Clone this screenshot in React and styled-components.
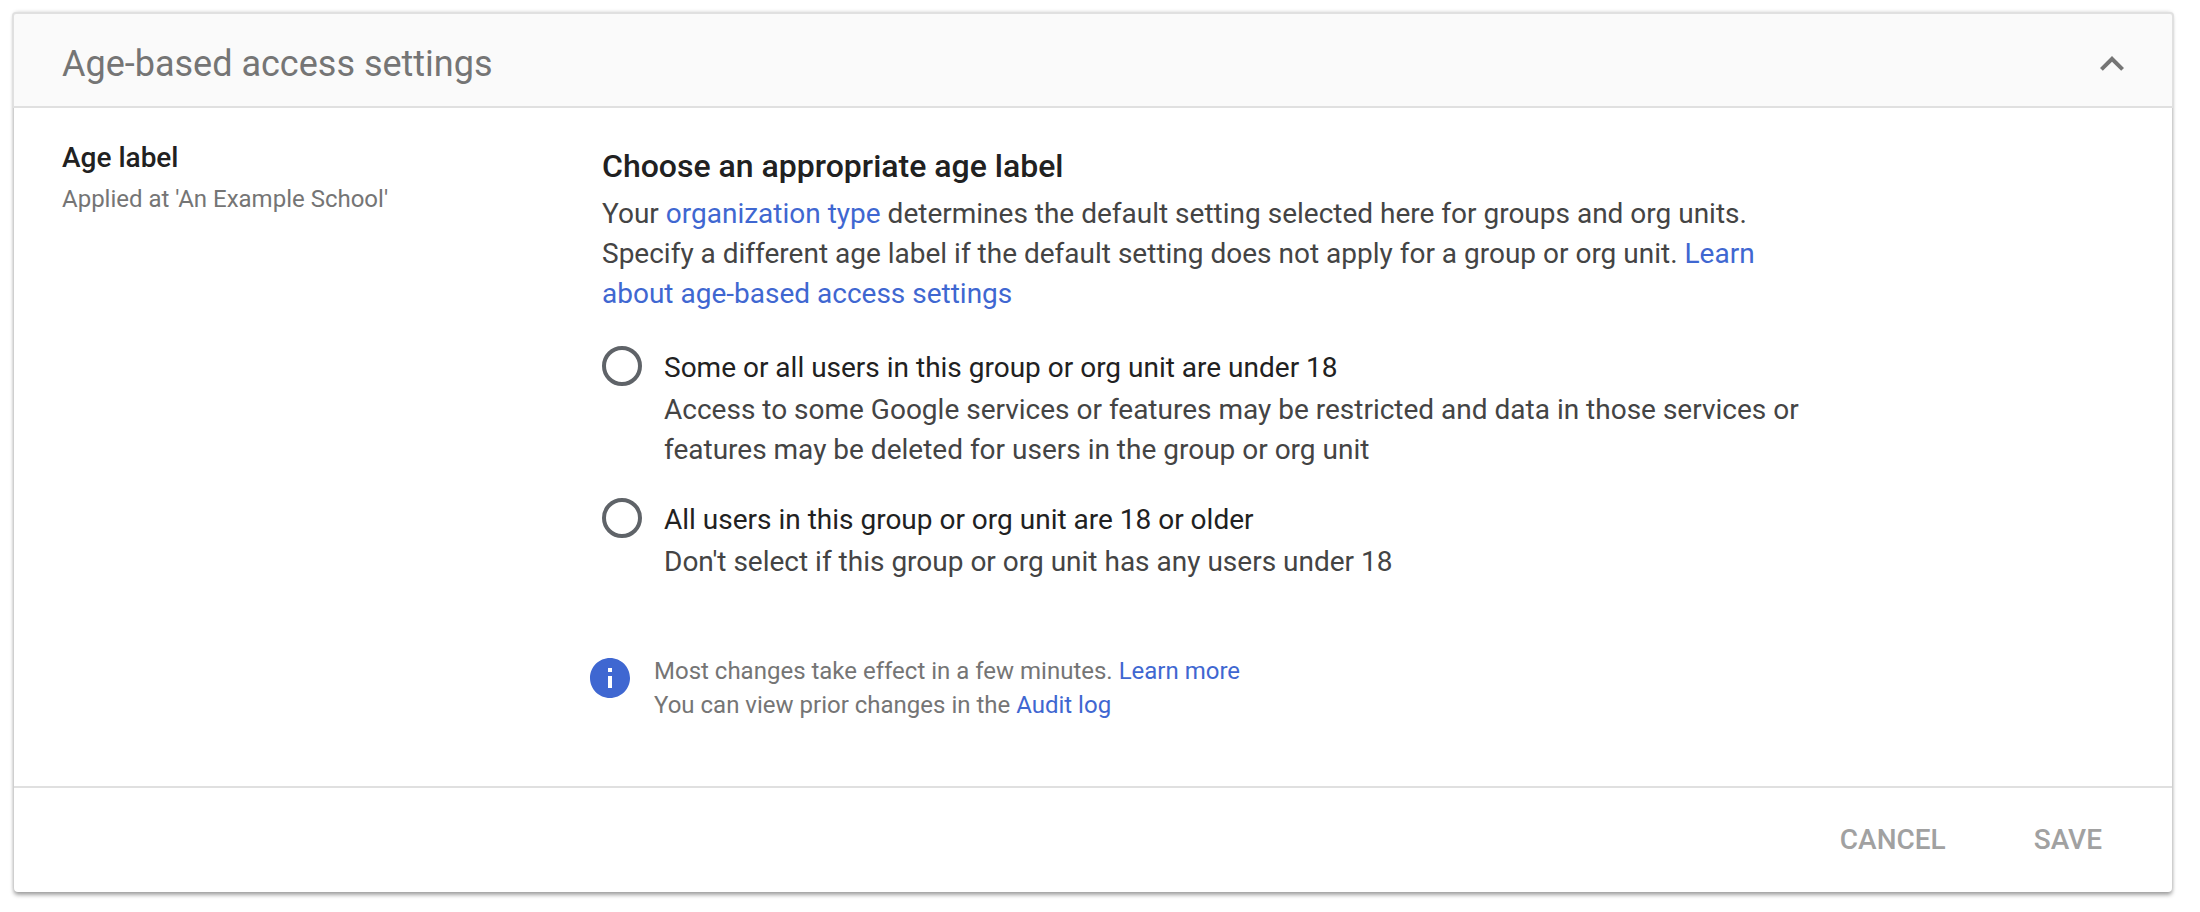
import React from "react";
import styled, { createGlobalStyle } from "styled-components";

const GlobalStyle = createGlobalStyle`
  *, *::before, *::after { box-sizing: border-box; }
  body {
    margin: 0;
    background: #fff;
    color: #212121;
    font-family: Roboto, "Liberation Sans", sans-serif;
    font-size: 28px;
    line-height: 40px;
  }
  h1, h2, h3, p, fieldset { margin: 0; padding: 0; border: 0; font-weight: 400; }
`;

const Page = styled.main`
  padding: 12px 28px 20px 14px;
`;

const Card = styled.section`
  background: #fff;
  border-radius: 4px;
  box-shadow: 0 0 4px rgba(0, 0, 0, 0.14), 0 3px 4px rgba(0, 0, 0, 0.34);
`;

const CardHeader = styled.header`
  display: flex;
  align-items: center;
  justify-content: space-between;
  height: 96px;
  margin: 0 -2px;
  padding: 8px 36px 0 48px;
  background: #fafafa;
  border: 2px solid #e0e0e0;
  border-radius: 4px 4px 0 0;
`;

const CardTitle = styled.h1`
  color: #757575;
  font-size: 36px;
  line-height: 48px;
`;

const CollapseButton = styled.button`
  display: flex;
  padding: 0;
  border: 0;
  background: none;
  color: #757575;
  cursor: pointer;
`;

const Icon = styled.svg`
  flex: none;
  width: 48px;
  height: 48px;
  fill: currentColor;
`;

const CardBody = styled.div`
  display: grid;
  grid-template-columns: minmax(0, 540px) minmax(0, 1248px);
  padding: 30px 48px 64px;
`;

const SettingName = styled.h2`
  font-size: 28px;
  font-weight: 500;
`;

const SettingScope = styled.p`
  margin-top: 4px;
  color: #757575;
  font-size: 24px;
  line-height: 34px;
`;

const Setting = styled.div`
  padding-top: 8px;
`;

const SettingTitle = styled.h3`
  font-size: 32px;
  font-weight: 500;
`;

const Description = styled.p`
  max-width: 1200px;
  margin-top: 8px;
  color: #444;
`;

const Link = styled.a`
  color: #3f67d1;
  text-decoration: none;
`;

const Options = styled.fieldset`
  display: flex;
  flex-direction: column;
  gap: 28px;
  margin-top: 32px;
`;

const Option = styled.div`
  display: grid;
  grid-template-columns: 40px minmax(0, 1fr);
  column-gap: 22px;
`;

const Radio = styled.input`
  appearance: none;
  width: 40px;
  height: 40px;
  margin: 0;
  border: 4px solid #5f6368;
  border-radius: 50%;
  cursor: pointer;

  &:checked {
    border-color: #3f67d1;
    background: radial-gradient(#3f67d1 50%, transparent 52%);
  }
`;

const OptionLabel = styled.label`
  line-height: 44px;
`;

const OptionHint = styled.p`
  grid-column: 2;
  color: #444;
`;

const Notice = styled.div`
  display: flex;
  gap: 20px;
  margin: 72px 0 0 -16px;
  color: #757575;
  font-size: 24px;
  line-height: 34px;
`;

const InfoIcon = styled(Icon)`
  color: #3f67d1;
`;

const CardFooter = styled.footer`
  display: flex;
  align-items: center;
  justify-content: flex-end;
  gap: 56px;
  height: 106px;
  padding: 0 54px;
  border-top: 2px solid #e0e0e0;
`;

const ActionButton = styled.button`
  padding: 0 16px;
  border: 0;
  background: none;
  color: #a1a1a1;
  font: 500 28px/40px Roboto, "Liberation Sans", sans-serif;
  text-transform: uppercase;
`;

const options = [
  {
    id: "under-18",
    label: "Some or all users in this group or org unit are under 18",
    hint: "Access to some Google services or features may be restricted and data in those services or features may be deleted for users in the group or org unit",
  },
  {
    id: "over-18",
    label: "All users in this group or org unit are 18 or older",
    hint: "Don't select if this group or org unit has any users under 18",
  },
];

export default function App() {
  return (
    <>
      <GlobalStyle />
      <Page>
        <Card>
          <CardHeader>
            <CardTitle>Age-based access settings</CardTitle>
            <CollapseButton type="button" aria-label="Collapse section" aria-expanded="true">
              <Icon viewBox="0 0 24 24" aria-hidden="true">
                <path d="M12 8l-6 6 1.41 1.41L12 10.83l4.59 4.58L18 14z" />
              </Icon>
            </CollapseButton>
          </CardHeader>
          <CardBody>
            <div>
              <SettingName>Age label</SettingName>
              <SettingScope>Applied at 'An Example School'</SettingScope>
            </div>
            <Setting>
              <SettingTitle id="age-title">Choose an appropriate age label</SettingTitle>
              <Description>
                Your <Link href="#organization-type">organization type</Link> determines the
                default setting selected here for groups and org units. Specify a different age
                label if the default setting does not apply for a group or org unit.{" "}
                <Link href="#access-settings">Learn about age-based access settings</Link>
              </Description>
              <Options aria-labelledby="age-title">
                {options.map(({ id, label, hint }) => (
                  <Option key={id}>
                    <Radio type="radio" name="age" id={id} aria-describedby={`${id}-hint`} />
                    <OptionLabel htmlFor={id}>{label}</OptionLabel>
                    <OptionHint id={`${id}-hint`}>{hint}</OptionHint>
                  </Option>
                ))}
              </Options>
              <Notice>
                <InfoIcon viewBox="0 0 24 24" aria-hidden="true">
                  <path d="M12 2C6.48 2 2 6.48 2 12s4.48 10 10 10 10-4.48 10-10S17.52 2 12 2zm1 15h-2v-6h2v6zm0-8h-2V7h2v2z" />
                </InfoIcon>
                <div>
                  <p>
                    Most changes take effect in a few minutes. <Link href="#learn-more">Learn more</Link>
                  </p>
                  <p>
                    You can view prior changes in the <Link href="#audit-log">Audit log</Link>
                  </p>
                </div>
              </Notice>
            </Setting>
          </CardBody>
          <CardFooter>
            <ActionButton type="button" disabled>Cancel</ActionButton>
            <ActionButton type="button" disabled>Save</ActionButton>
          </CardFooter>
        </Card>
      </Page>
    </>
  );
}
